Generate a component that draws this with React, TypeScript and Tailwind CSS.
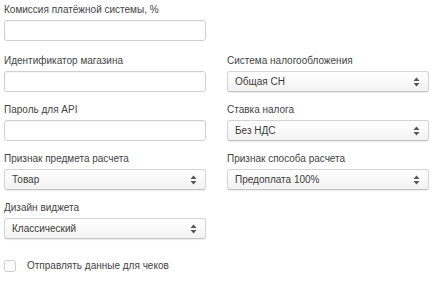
import React from "react";

const Arrows = () => (
  <svg width="7" height="10" viewBox="0 0 7 10" className="shrink-0">
    <path d="M3.5 0.5 L6.5 4 L0.5 4 Z" fill="#555" />
    <path d="M3.5 9.5 L6.5 6 L0.5 6 Z" fill="#555" />
  </svg>
);

const Label = ({ children }: { children: React.ReactNode }) => (
  <div className="text-[10px] leading-[13px] text-[#444] mb-[4px] whitespace-nowrap">{children}</div>
);

const TextField = ({ label }: { label: string }) => (
  <div>
    <Label>{label}</Label>
    <div className="h-[21px] border border-[#cfcfcf] rounded-[3px] bg-white shadow-[inset_0_1px_1px_rgba(0,0,0,0.04)]" />
  </div>
);

const SelectField = ({ label, value }: { label: string; value: string }) => (
  <div>
    <Label>{label}</Label>
    <div className="h-[21px] flex items-center justify-between pl-[7px] pr-[8px] border border-[#d4d4d4] border-b-[#c4c4c4] rounded-[3px] bg-gradient-to-b from-white to-[#f3f3f3] shadow-[0_1px_1px_rgba(0,0,0,0.08)] text-[10px] text-[#3a3a3a]">
      <span>{value}</span>
      <Arrows />
    </div>
  </div>
);

export default function App() {
  return (
    <div
      className="w-[436px] h-[281px] bg-white pl-[4px] pt-[3px]"
      style={{ fontFamily: '"Liberation Sans", Arial, sans-serif' }}
    >
      <div className="grid grid-cols-[202px_202px] gap-x-[21px] gap-y-[11px]">
        <div className="mb-[2px]">
          <TextField label="Комиссия платёжной системы, %" />
        </div>
        <div />
        <TextField label="Идентификатор магазина" />
        <SelectField label="Система налогообложения" value="Общая СН" />
        <TextField label="Пароль для API" />
        <SelectField label="Ставка налога" value="Без НДС" />
        <SelectField label="Признак предмета расчета" value="Товар" />
        <SelectField label="Признак способа расчета" value="Предоплата 100%" />
        <SelectField label="Дизайн виджета" value="Классический" />
        <div />
      </div>
      <div className="flex items-center mt-[20px]">
        <div className="w-[12px] h-[12px] border border-[#cfcfcf] rounded-[3px] bg-white" />
        <span className="ml-[11px] text-[10px] leading-[14px] text-[#444]">Отправлять данные для чеков</span>
      </div>
    </div>
  );
}
